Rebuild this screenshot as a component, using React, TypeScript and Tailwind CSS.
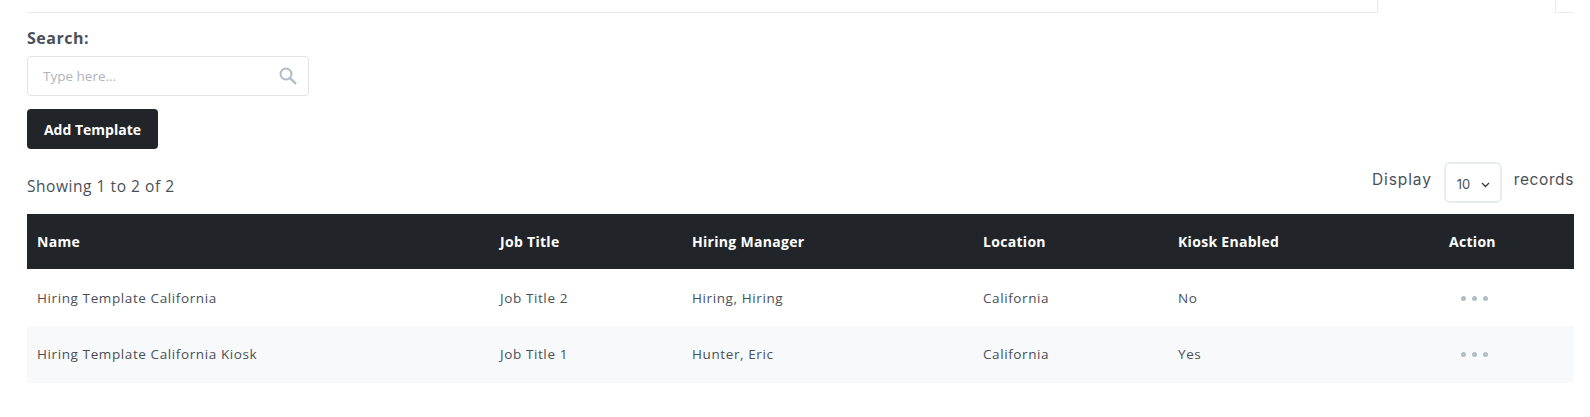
const rows = [
  { name: "Hiring Template California", title: "Job Title 2", manager: "Hiring, Hiring", location: "California", kiosk: "No" },
  { name: "Hiring Template California Kiosk", title: "Job Title 1", manager: "Hunter, Eric", location: "California", kiosk: "Yes" },
];

function Dots() {
  return (
    <div className="flex gap-[6px] pl-[12px]">
      <span className="size-[5px] rounded-full bg-[#b1bec6]" />
      <span className="size-[5px] rounded-full bg-[#b1bec6]" />
      <span className="size-[5px] rounded-full bg-[#b1bec6]" />
    </div>
  );
}

export default function App() {
  return (
    <main className="h-[417px] w-[1590px] overflow-hidden bg-white pl-[27px] pr-[16px] font-['Open_Sans',sans-serif] text-[#495057]">
      <div className="flex h-[13px]">
        <div className="w-[1351px] border-r border-b border-[#e9ecef]" />
        <div className="ml-[177px] flex-1 border-l border-b border-[#e9ecef]" />
      </div>

      <label className="mt-[14px] block text-[16px] leading-[23px] font-bold tracking-[0.5px]">Search:</label>
      <div className="mt-[6px] flex h-[40px] w-[282px] items-center justify-between rounded border border-[#e2e5e8] pr-[11px] pl-[15px]">
        <span className="text-[13.5px] text-[#adb5bd]">Type here...</span>
        <svg width="18" height="18" viewBox="0 0 18 18" fill="none" stroke="#adbcc4" strokeWidth="2">
          <circle cx="7" cy="7" r="5.5" />
          <path d="M11 11l6 6" strokeWidth="2.4" />
        </svg>
      </div>

      <button className="mt-[13px] block h-[40px] w-[131px] rounded bg-[#212529] text-[14px] font-bold text-white">
        Add Template
      </button>

      <div className="mt-[13px] flex h-[52px] items-start justify-between">
        <span className="mt-[12px] text-[15.5px] leading-[24px] tracking-[0.55px]">Showing 1 to 2 of 2</span>
        <div className="flex items-start text-[15.5px]">
          <span className="mt-[6px] font-['Inter',sans-serif] leading-[24px] tracking-[0.9px]">Display</span>
          <div className="mx-[12px] flex h-[41px] w-[58px] items-center justify-between rounded-md border-2 border-[#e9ecef] pt-[4px] pr-[10px] pl-[11px] font-['Inter',sans-serif] text-[13px]">
            <span>10</span>
            <svg width="9" height="6" viewBox="0 0 9 6" fill="none" stroke="#343a40" strokeWidth="1.3">
              <path d="M1 1l3.5 3.5L8 1" />
            </svg>
          </div>
          <span className="mt-[6px] font-['Inter',sans-serif] leading-[24px] tracking-[0.6px]">records</span>
        </div>
      </div>

      <table className="w-[1547px] table-fixed border-collapse text-[13.5px] tracking-[0.6px]">
        <colgroup>
          <col className="w-[463px]" />
          <col className="w-[192px]" />
          <col className="w-[291px]" />
          <col className="w-[195px]" />
          <col className="w-[271px]" />
          <col className="w-[135px]" />
        </colgroup>
        <thead>
          <tr className="h-[55px] bg-[#212529] text-left text-[14px] tracking-[0.3px] text-white">
            <th className="pb-[1px] pl-[10px] font-bold">Name</th>
            <th className="pl-[10px] font-bold">Job Title</th>
            <th className="pl-[10px] font-bold">Hiring Manager</th>
            <th className="pl-[10px] font-bold">Location</th>
            <th className="pl-[10px] font-bold">Kiosk Enabled</th>
            <th className="pb-[1px] pl-[10px] font-bold">Action</th>
          </tr>
        </thead>
        <tbody>
          {rows.map((row, i) => (
            <tr key={row.name} className={i % 2 === 1 ? "h-[57px] bg-[#f8f9fa]" : "h-[57px] [&>td]:pt-[1px]"}>
              <td className="pl-[10px]">{row.name}</td>
              <td className="pl-[10px]">{row.title}</td>
              <td className="pl-[10px]">{row.manager}</td>
              <td className="pl-[10px]">{row.location}</td>
              <td className="pl-[10px]">{row.kiosk}</td>
              <td className="pl-[10px]"><Dots /></td>
            </tr>
          ))}
        </tbody>
      </table>
    </main>
  );
}
